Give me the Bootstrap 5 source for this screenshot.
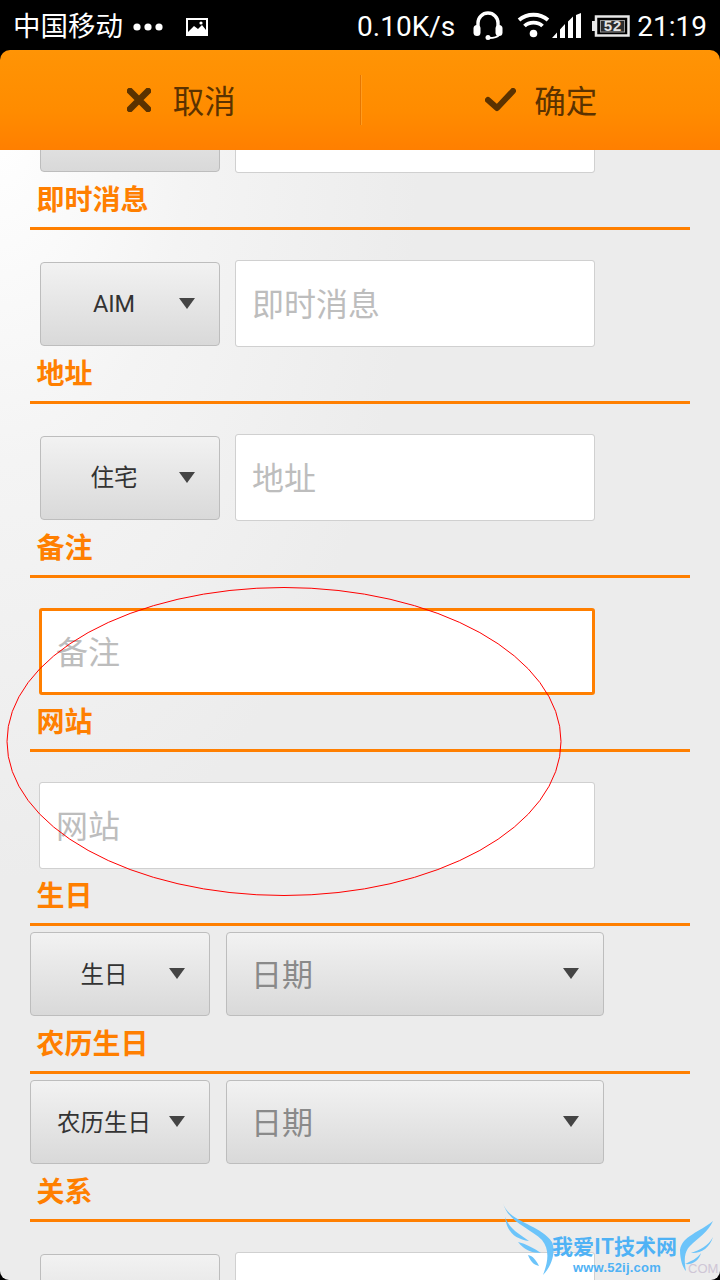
<!DOCTYPE html>
<html lang="zh-CN">
<head>
  <meta charset="UTF-8" />
  <meta name="viewport" content="width=device-width, initial-scale=1">
  <title>编辑联系人</title>
  <link href="https://cdn.jsdelivr.net/npm/bootstrap@5.3.0/dist/css/bootstrap.min.css" rel="stylesheet">
  <style>
    body {
      margin: 0;
      background: #000;
      font-family: Roboto, "Noto Sans CJK SC", sans-serif;
    }

    .phone {
      position: relative;
      width: 720px;
      height: 1280px;
      overflow: hidden;
      border-radius: 0 0 9px 9px;
      background: radial-gradient(ellipse 420px 760px at 0 120px, #ffffff 0%, #f4f4f4 45%, #ececec 100%) #ececec;
    }

    .top-wrap {
      position: relative;
      z-index: 2;
      background: #000;
    }

    .status-bar {
      height: 50px;
      padding-top: 3px;
      color: #fff;
      font-size: 28px;
      line-height: 47px;
    }

    .carrier { margin-left: 13px; font-size: 27.5px; }
    .status-dots { margin-left: 9px; }
    .status-pic { margin-left: 20px; }
    .net-speed { margin-left: auto; }
    .status-clock { margin-left: 7px; margin-right: 13px; }
    .icon-phones { margin-left: 18px; margin-top: -3px; }
    .icon-wifi { margin-left: 14px; margin-top: -3px; }
    .icon-signal { margin-left: 2px; margin-top: -3px; }
    .icon-battery { margin-left: 10px; margin-top: -1px; }

    .action-bar {
      height: 100px;
      border-radius: 10px 10px 0 0;
      background: linear-gradient(to bottom, #ff9405, #ff8c00 60%, #ff7f00);
    }

    .action-btn {
      flex: 1 1 50%;
      gap: 22px;
      height: 100%;
      color: #5b3200;
      font-size: 31.5px;
      line-height: 1;
    }

    .action-btn span { padding-top: 5px; }
    .action-btn.cancel-btn { padding-left: 3px; }
    .action-btn.confirm-btn { gap: 18px; padding-left: 2px; }

    .action-sep {
      width: 1px;
      height: 50px;
      background: #e67600;
      box-shadow: 1px 0 0 #ff9c20;
    }

    .form-scroll { margin-top: -64px; }

    .field-title {
      height: 57px;
      margin: 0 30px;
      padding-top: 1px;
      padding-left: 6.5px;
      border-bottom: 3px solid #ff7f00;
      color: #ff7f00;
      font-size: 28px;
      font-weight: 700;
      line-height: 1;
    }

    .field-row { padding-top: 30px; padding-left: 40px; gap: 15px; }
    .field-row.first-row { padding-top: 0; }
    .field-row.date-row { padding-top: 6px; padding-bottom: 1px; padding-left: 30px; gap: 16px; }
    .field-row.wide-row { padding-left: 39px; }

    .fake-select {
      position: relative;
      flex: none;
      width: 180px;
      height: 84px;
      padding: 3px 32px 0 0;
      border: 1px solid #bdbdbd;
      border-radius: 4px;
      background: linear-gradient(to bottom, #f2f2f2, #d9d9d9);
      color: #333;
      font-size: 23.5px;
      line-height: 1;
    }

    .fake-select.date-pick {
      width: 378px;
      padding-left: 24px;
      padding-top: 2px;
      color: #8a8a8a;
      font-size: 31px;
      text-align: left;
    }

    .fake-select::after {
      content: "";
      position: absolute;
      top: 35px;
      right: 24px;
      border-style: solid;
      border-width: 11px 8.5px 0;
      border-color: #444 transparent transparent;
    }

    .form-control.field-input {
      flex: none;
      width: 360px;
      height: 87px;
      padding: 2px 16px 0;
      border: 1px solid #d0d0d0;
      border-radius: 3px;
      color: #333;
      font-size: 32px;
    }

    .form-control.field-input::placeholder { color: #bdbdbd; opacity: 1; }
    .form-control.field-input.wide-input { width: 556px; }
    .form-control.field-input.focused { border: 3px solid #ff7f00; padding-left: 14px; }

    .hand-ellipse {
      position: absolute;
      top: 580px;
      left: 0;
      z-index: 3;
    }

    .watermark {
      position: absolute;
      left: 500px;
      top: 1200px;
      z-index: 3;
      width: 220px;
      height: 80px;
    }

    .watermark-name {
      font-family: "Noto Sans CJK SC", sans-serif;
      font-size: 21px;
      font-weight: 700;
      fill: #4fb2f5;
    }

    .watermark-url {
      font-family: "Liberation Sans", sans-serif;
      font-size: 13px;
      font-weight: 700;
      letter-spacing: .2px;
      fill: #4fb2f5;
    }

    .watermark-ghost {
      font-family: "Liberation Sans", sans-serif;
      font-size: 13px;
      fill: #cfc6d6;
    }

    .wing { fill: #6cc4fa; }

    .battery-level {
      font-family: "Liberation Mono", monospace;
      font-size: 15px;
      font-weight: 700;
      fill: #e4e4e4;
    }
  </style>
</head>
<body>

  <div class="phone">

    <div class="top-wrap">
      <div class="status-bar d-flex align-items-center">
        <span class="carrier">中国移动</span>
        <svg class="status-dots" width="34" height="10" viewBox="0 0 34 10"><circle cx="5" cy="5" r="3.6" fill="#fff"/><circle cx="16" cy="5" r="3.6" fill="#fff"/><circle cx="27" cy="5" r="3.6" fill="#fff"/></svg>
        <svg class="status-pic" width="22" height="18" viewBox="0 0 22 18"><rect x="1" y="1" width="20" height="16" fill="#000" stroke="#fff" stroke-width="2"/><path d="M2 14 L8 8 L12 11 L16 7 L20 12 V16 H2 Z" fill="#fff"/><circle cx="15" cy="5" r="1.6" fill="#fff"/></svg>
        <span class="net-speed">0.10K/s</span>
        <svg class="icon-phones" width="30" height="29" viewBox="0 0 30 29"><path d="M5 17 V12 A10 10 0 0 1 25 12 V17" fill="none" stroke="#fff" stroke-width="3.4"/><rect x="0.5" y="14" width="7" height="11" rx="3.5" fill="#fff"/><rect x="22.5" y="14" width="7" height="11" rx="3.5" fill="#fff"/><path d="M26 24 Q24 27 16 27" fill="none" stroke="#fff" stroke-width="2"/><circle cx="15" cy="26.5" r="2.5" fill="#fff"/></svg>
        <svg class="icon-wifi" width="33" height="26" viewBox="0 0 33 26"><path d="M2 8 C10 1 23 1 31 8" fill="none" stroke="#fff" stroke-width="3.8"/><path d="M7.5 14 C12 9.5 21 9.5 25.5 14" fill="none" stroke="#fff" stroke-width="3.8"/><circle cx="16.5" cy="21.5" r="3.8" fill="#fff"/></svg>
        <svg class="icon-signal" width="30" height="25" viewBox="0 0 30 25"><path d="M0 25 L5 19.5 V25 Z M8 25 V16.5 L13 11 V25 Z M16 25 V8.5 L21 3.5 V25 Z M24 25 V2 L29 0 V25 Z" fill="#fff"/></svg>
        <svg class="icon-battery" width="38" height="22" viewBox="0 0 38 22"><rect x="4" y="1.5" width="32.5" height="19" fill="none" stroke="#e8e8e8" stroke-width="2.5"/><rect x="0" y="6" width="3" height="10" fill="#e8e8e8"/><rect x="8.5" y="5.5" width="24" height="11.5" fill="#2c2c2c" stroke="#999" stroke-width="1"/><text class="battery-level" x="11.5" y="16">52</text></svg>
        <span class="status-clock">21:19</span>
      </div>
      <div class="action-bar d-flex align-items-center">
        <div class="action-btn cancel-btn d-flex align-items-center justify-content-center">
          <svg width="24" height="24" viewBox="0 0 24 24"><path d="M3 3 L21 21 M21 3 L3 21" stroke="#5b3200" stroke-width="6.5" stroke-linecap="round" fill="none"/></svg>
          <span>取消</span>
        </div>
        <div class="action-sep"></div>
        <div class="action-btn confirm-btn d-flex align-items-center justify-content-center">
          <svg width="31" height="24" viewBox="0 0 31 24"><path d="M3 12 L12 20 L28 3" stroke="#5b3200" stroke-width="6" stroke-linejoin="round" stroke-linecap="round" fill="none"/></svg>
          <span>确定</span>
        </div>
      </div>
    </div>

    <div class="form-scroll">
      <div class="field-row first-row d-flex align-items-center">
        <button type="button" class="btn fake-select"></button>
        <input type="text" class="form-control field-input">
      </div>

      <div class="field-title d-flex align-items-center">即时消息</div>
      <div class="field-row d-flex align-items-center">
        <button type="button" class="btn fake-select">AIM</button>
        <input type="text" class="form-control field-input" placeholder="即时消息">
      </div>

      <div class="field-title d-flex align-items-center">地址</div>
      <div class="field-row d-flex align-items-center">
        <button type="button" class="btn fake-select">住宅</button>
        <input type="text" class="form-control field-input" placeholder="地址">
      </div>

      <div class="field-title d-flex align-items-center">备注</div>
      <div class="field-row wide-row d-flex align-items-center">
        <input type="text" class="form-control field-input wide-input focused" placeholder="备注">
      </div>

      <div class="field-title d-flex align-items-center">网站</div>
      <div class="field-row wide-row d-flex align-items-center">
        <input type="text" class="form-control field-input wide-input" placeholder="网站">
      </div>

      <div class="field-title d-flex align-items-center">生日</div>
      <div class="field-row date-row d-flex align-items-center">
        <button type="button" class="btn fake-select">生日</button>
        <button type="button" class="btn fake-select date-pick">日期</button>
      </div>

      <div class="field-title d-flex align-items-center">农历生日</div>
      <div class="field-row date-row d-flex align-items-center">
        <button type="button" class="btn fake-select">农历生日</button>
        <button type="button" class="btn fake-select date-pick">日期</button>
      </div>

      <div class="field-title d-flex align-items-center">关系</div>
      <div class="field-row d-flex align-items-center">
        <button type="button" class="btn fake-select"></button>
        <input type="text" class="form-control field-input">
      </div>
    </div>

    <!-- red circle drawn over the screenshot -->
    <svg class="hand-ellipse" width="600" height="330" viewBox="0 0 600 330"><ellipse cx="284" cy="161.5" rx="277" ry="154" fill="none" stroke="#f00" stroke-width="1"/></svg>

    <svg class="watermark" viewBox="0 0 220 80">
      <text class="watermark-ghost" x="188" y="73">COM</text>
      <path class="wing" d="M3 3 C8 22 40 24 52 42 C56 52 52 66 43 75 C48 62 50 50 42 40 C30 28 8 22 3 3 Z"/>
      <path class="wing" d="M5 17 C7 33 16 39 29 41 C20 34 10 30 5 17 Z"/>
      <path class="wing" d="M18 42 C24 50 32 53 41 53 C34 48 26 44 18 42 Z"/>
      <path class="wing" d="M28 55 C31 63 35 65 39 66 C36 60 33 56 28 55 Z"/>
      <path class="wing" d="M213 21 C200 32 182 36 180 50 C180 60 183 68 186 71 C184 60 184 52 190 46 C198 38 208 32 213 21 Z"/>
      <path class="wing" d="M213 37 C208 46 200 50 191 53 C200 54 210 48 213 37 Z"/>
      <path class="wing" d="M201 53 C197 59 191 61 185 64 C192 65 199 61 201 53 Z"/>
      <text class="watermark-name" x="52" y="54">我爱IT技术网</text>
      <text class="watermark-url" x="73" y="72">www.52ij.com</text>
    </svg>

  </div>

  <script src="https://cdn.jsdelivr.net/npm/bootstrap@5.3.0/dist/js/bootstrap.bundle.min.js"></script>
</body>
</html>
